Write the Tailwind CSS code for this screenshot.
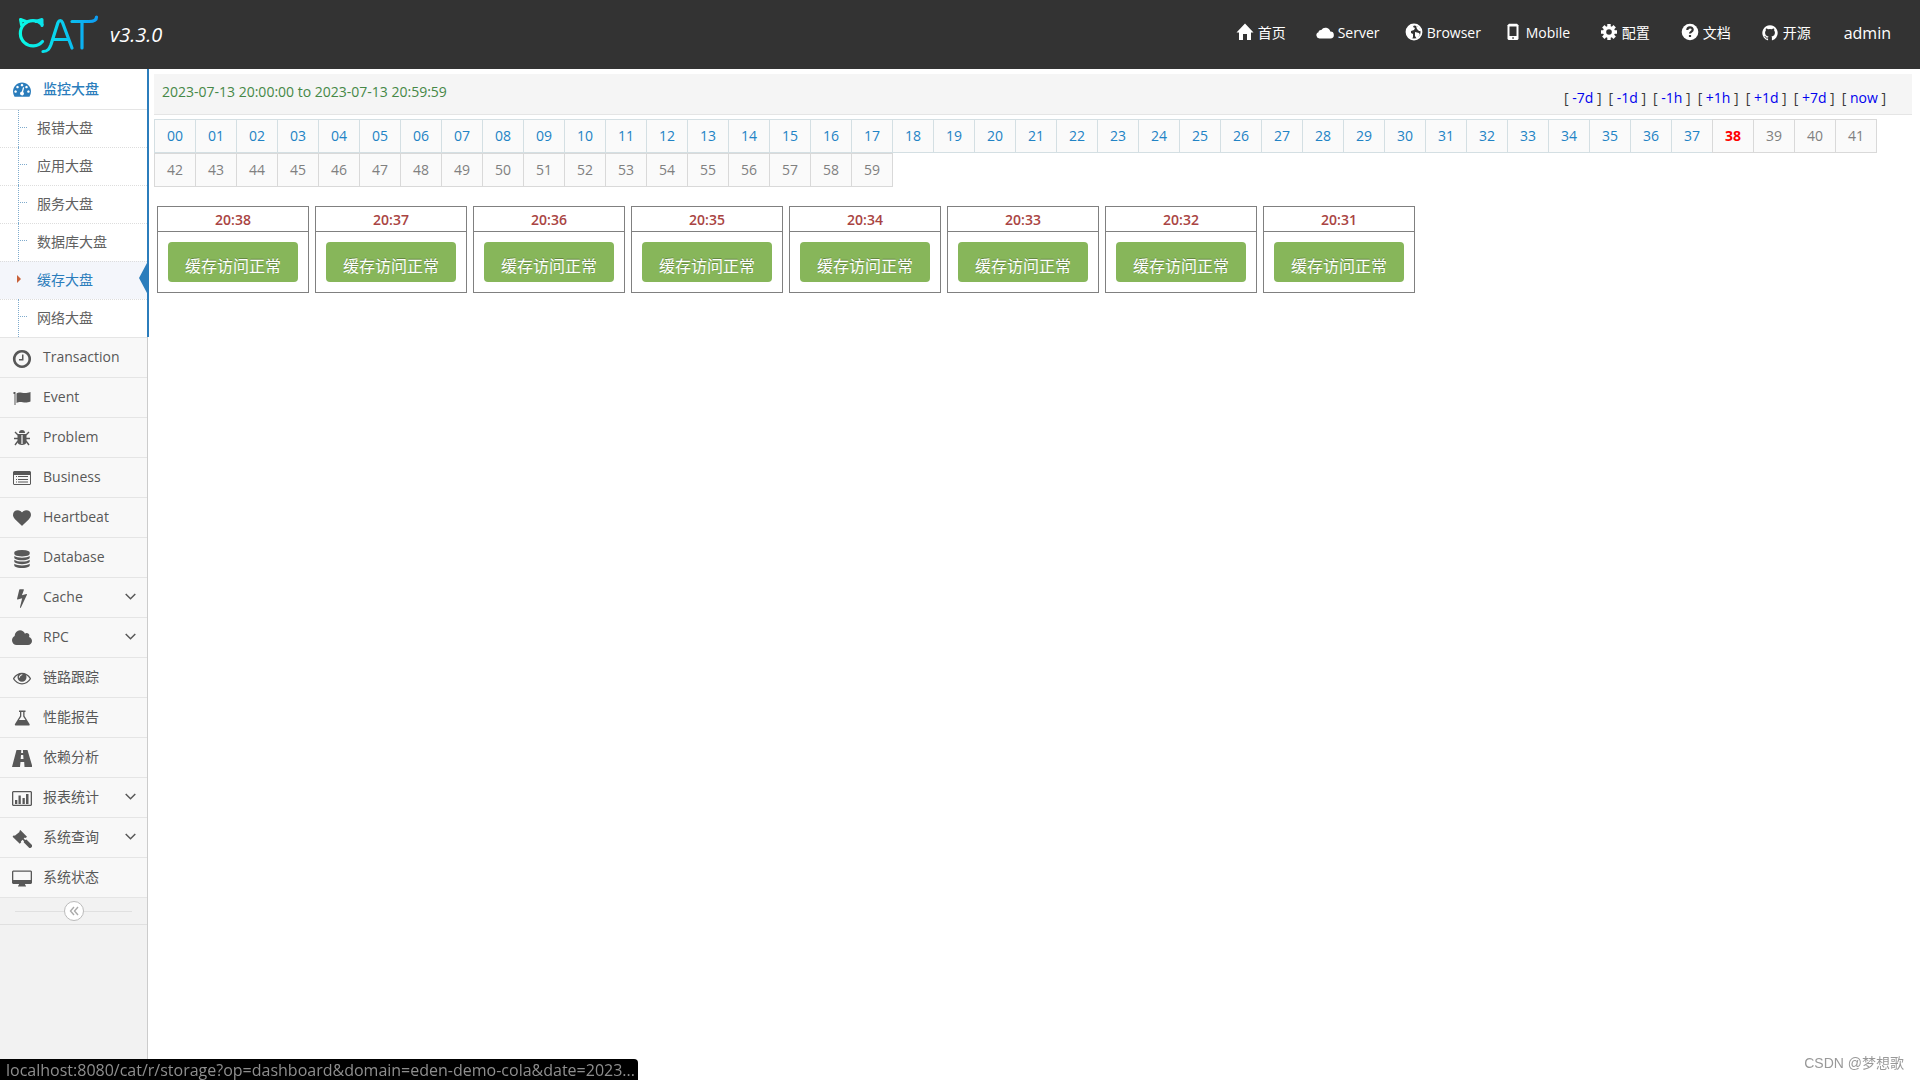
<!DOCTYPE html>
<html lang="zh-CN">
<head>
<meta charset="utf-8">
<meta name="viewport" content="width=device-width, initial-scale=1">
<title>CAT</title>
<script src="https://cdn.jsdelivr.net/npm/@tailwindcss/browser@4"></script>
</head>
<body class="flex min-h-screen flex-col bg-white font-['Open_Sans','Noto_Sans_CJK_SC',sans-serif] text-sm text-[#393939]">
<header class="flex h-[69px] shrink-0 items-center justify-between bg-[#333] text-white">
  <a href="#" class="flex items-center pb-[2px] pl-4">
    <svg class="h-12 w-[84px]" viewBox="0 0 84 48" fill="none" stroke-width="3.2" stroke-linecap="round" stroke-linejoin="round" role="img" aria-label="CAT">
      <defs><linearGradient id="g" gradientUnits="userSpaceOnUse" x1="2" y1="0" x2="82" y2="0"><stop offset="0" stop-color="#08fce4"/><stop offset=".5" stop-color="#0ad2ee"/><stop offset="1" stop-color="#0d9cf4"/></linearGradient></defs>
      <g stroke="url(#g)">
        <path d="M26.500 31.500A12.600 12.600 0 1 1 26 14.500"/>
        <path d="M5.500 15 4.500 9.500 10 11.500M26 15.500V9.500l-6 2" stroke-width="3"/>
        <path d="M27 41.500c5 0 6.500-3 8-7L42 12.500c1-2.500 3.500-2.500 4.500 0l9.500 25.500M38 29.500h14"/>
        <path d="M56 11.500h17c5 0 7.500-1 7.500-4.500M66 12v26"/>
      </g>
    </svg>
    <span class="mt-[2px] pl-[10px] text-xl italic">v3.3.0</span>
  </a>
  <nav aria-label="主导航" class="flex h-[66px] items-center pr-[29px] pb-1">
    <a href="#" class="flex w-20 items-center gap-1"><svg class="size-[18px] -translate-y-px" viewBox="0 0 18 18" fill="currentColor"><path d="M9 .5 17.500 9.500H15V17h-4v-6H7v6H3V9.500H.5Z"/></svg>首页</a>
    <a href="#" class="flex w-[89px] items-center gap-1"><svg class="size-[18px]" viewBox="0 0 18 18" fill="currentColor"><path d="M3.500 14.500a3.200 3.200 0 0 1-1-6.200 2.300 2.300 0 0 1 2.800-2.300A5 5 0 0 1 14.300 7.600 3.400 3.400 0 0 1 14.500 14.500Z"/></svg>Server</a>
    <a href="#" class="flex w-[99px] items-center gap-1"><svg class="size-[18px] -translate-y-px" viewBox="0 0 18 18"><circle cx="9" cy="9" r="7.500" fill="#333" stroke="#fff" stroke-width="1.800"/><path d="M2 6 5 2.500 9 2 8 4l2 1-1 2-3 1 0 2 2 1 0 3-1 2C3 15 1 10 2 6ZM11 3l3 1 2 4-2 0-2-2ZM10 9l4 1 1 2-3 4-2-3Z" fill="#fff"/></svg>Browser</a>
    <a href="#" class="flex w-24 items-center gap-1"><svg class="size-[18px] -translate-y-px" viewBox="0 0 18 18"><path d="M5 .8h8l1.500 1.500V16L13.500 17h-9L3.500 16V2.300Z" fill="#fff"/><path d="M5.500 3.500h7v9.500h-7ZM8.300 14.300h1.500v1.500H8.300Z" fill="#333"/></svg>Mobile</a>
    <a href="#" class="flex w-[81px] items-center gap-1"><svg class="size-[18px] -translate-y-px" viewBox="0 0 18 18"><g stroke="#fff" stroke-width="3.400"><path d="M9 1v16M1 9h16M3.300 3.300l11.400 11.400M14.700 3.300 3.300 14.700"/></g><circle cx="9" cy="9" r="6" fill="#fff"/><circle cx="9" cy="9" r="2.800" fill="#333"/></svg>配置</a>
    <a href="#" class="flex w-20 items-center gap-1"><svg class="size-[18px] -translate-y-px" viewBox="0 0 18 18"><circle cx="9" cy="9" r="8.300" fill="#fff"/><path d="M6.300 7c0-3.500 5.400-3.500 5.400-.3C11.700 8.500 9 8.600 9 10.500M9 12v2" fill="none" stroke="#333" stroke-width="2.200"/></svg>文档</a>
    <a href="#" class="flex w-[83px] items-center gap-1"><svg class="size-[18px]" viewBox="0 0 1792 1792" fill="currentColor"><path d="M896 128q209 0 385.500 103t279.500 279.500 103 385.500q0 251-146.500 451.500t-378.500 277.500q-27 5-40-7t-13-30q0-3 .5-76.500t.5-134.500q0-97-52-142 57-6 102.500-18t94-39 81-66.500 53-105 20.500-150.500q0-119-79-206 37-91-8-204-28-9-81 11t-92 44l-38 24q-93-26-192-26t-192 26q-16-11-42.500-27t-83.500-38.500-85-13.500q-45 113-8 204-79 87-79 206 0 85 20.500 150t52.500 105 80.500 67 94 39 102.500 18q-39 36-49 103-21 10-45 15t-57 5-65.500-21.500-55.500-62.500q-19-32-48.500-52t-49.500-24l-20-3q-21 0-29 4.500t-5 11.500 9 14 13 12l7 5q22 10 43.500 38t31.500 51l10 23q13 38 44 61.500t67 30 69.500 7 55.500-3.500l23-4q0 38 .5 88.500t.5 54.500q0 18-13 30t-40 7q-232-77-378.500-277.500t-146.500-451.500q0-209 103-385.500t279.500-279.500 385.500-103z"/></svg>开源</a>
    <a href="#" class="text-base">admin</a>
  </nav>
</header>
<div class="flex grow">
  <aside class="flex w-[148px] shrink-0 flex-col border-r border-[#ccc] bg-[#f2f2f2] text-[#585858]">
    <div class="relative z-10 -mr-[2px] border-r-2 border-[#2b7dbc] bg-white">
      <a href="#" class="flex h-[41px] items-center border-b border-[#e5e5e5] pl-3 font-medium text-[#2b7dbc]">
        <svg class="mr-[11px] size-5" viewBox="-100 0 1992 1792" fill="currentColor"><path fill-rule="evenodd" d="M384 1152q0-53-37.500-90.500t-90.500-37.500-90.500 37.500-37.500 90.500 37.500 90.500 90.500 37.500 90.500-37.500 37.500-90.500zm192-448q0-53-37.500-90.500t-90.500-37.500-90.500 37.500-37.500 90.500 37.500 90.500 90.500 37.500 90.500-37.500 37.500-90.500zm428 481l101-382q6-26-7.500-48.500t-38.500-29.500-48 6.500-30 39.500l-101 382q-60 5-107 43.500t-63 98.500q-20 77 20 146t117 89 146-20 89-117q16-60-6-117t-72-91zm660-33q0-53-37.500-90.500t-90.500-37.500-90.500 37.500-37.500 90.500 37.500 90.500 90.500 37.500 90.500-37.500 37.500-90.500zm-640-640q0-53-37.500-90.500t-90.500-37.500-90.500 37.500-37.500 90.500 37.500 90.500 90.500 37.500 90.500-37.500 37.500-90.500zm448 192q0-53-37.500-90.500t-90.500-37.500-90.500 37.500-37.500 90.500 37.500 90.500 90.500 37.500 90.500-37.500 37.500-90.500zm320 448q0 261-141 483-19 29-54 29h-1402q-35 0-54-29-141-221-141-483 0-182 71-348t191-286 286-191 348-71 348 71 286 191 191 286 71 348z"/></svg>监控大盘
      </a>
      <ul id="sub"></ul>
    </div>
    <ul id="menu" class="border-t border-[#e5e5e5]"></ul>
    <div class="relative flex h-[27px] items-center justify-center border-b border-[#e0e0e0] before:absolute before:inset-x-[15px] before:top-[13px] before:border-t before:border-[#e0e0e0]">
      <button aria-label="收起菜单" class="relative flex size-5 items-center justify-center rounded-full border border-[#bbb] bg-white text-[#aaa]"><svg class="size-3" viewBox="0 0 12 12" fill="none" stroke="currentColor" stroke-width="1.400"><path d="M6 2 2.500 6 6 10M10 2 6.500 6 10 10"/></svg></button>
    </div>
  </aside>
  <main class="min-w-0 grow pt-[5px] pr-2 pl-[6px]">
    <div class="flex h-[41px] justify-between border-b border-[#e5e5e5] bg-[#f5f5f5] pr-[26px] pl-2">
      <span class="pt-2 text-[#468847]">2023-07-13 20:00:00 to 2023-07-13 20:59:59</span>
      <div id="range" class="flex gap-[7px] pt-[14px]"></div>
    </div>
    <div id="minutes" class="mt-1 flex flex-wrap pr-[30px]"></div>
    <div id="cards" class="mt-[19px] flex flex-wrap gap-[6px] pl-[3px]"></div>
  </main>
</div>
<div class="fixed bottom-0 left-0 z-20 h-[21px] w-[638px] overflow-hidden rounded-tr bg-black pl-[6px] text-base leading-[22px] whitespace-nowrap text-[#8e8e8e]">localhost:8080/cat/r/storage?op=dashboard&amp;domain=eden-demo-cola&amp;date=2023...</div>
<div class="fixed right-4 bottom-[7px] font-['Liberation_Sans','Noto_Sans_CJK_SC',sans-serif] text-sm text-[#999]">CSDN @梦想歌</div>
<script>
const svg = (box, body) => `<svg class="mt-1 mr-[11px] size-5" viewBox="${box}" fill="currentColor">${body}</svg>`;
const icons = {
  clock: svg('-50 -50 1892 1892', '<path fill-rule="evenodd" d="M1024 544v448q0 14-9 23t-23 9h-320q-14 0-23-9t-9-23v-64q0-14 9-23t23-9h224v-352q0-14 9-23t23-9h64q14 0 23 9t9 23zm416 352q0-148-73-273t-198-198-273-73-273 73-198 198-73 273 73 273 198 198 273 73 273-73 198-198 73-273zm224 0q0 209-103 385.500t-279.500 279.500-385.500 103-385.500-103-279.500-279.500-103-385.500 103-385.500 279.500-279.500 385.500-103 385.500 103 279.500 279.500 103 385.500z" transform="translate(-110 -110) scale(1.120)"/>'),
  flag: svg('0 0 20 20', '<path d="M1.500 3h2v13h-1V5h-1ZM4.500 4.500c4-3 6 1.500 14-1.500v9.500c-7 3-9-1.500-14 1.500Z"/>'),
  bug: svg('0 0 20 20', '<path d="M7 4a3 3 0 0 1 6 0ZM5.500 5h9v8c0 4-9 4-9 0Z"/><path d="M6 6 3 3M14 6l3-3M6 9.500H2M14 9.500h4M6 12l-3 4M14 12l3 4" stroke="currentColor" stroke-width="1.400"/><path d="M9.400 6h1.200v9H9.400Z" fill="#f8f8f8"/>'),
  list: svg('0 1 20 20', '<path fill-rule="evenodd" d="M2 3h16l1 1v12l-1 1H2l-1-1V4Zm0 4v9h16V7ZM4 8h1v1H4ZM6 8h10v1H6ZM4 11h1v1H4ZM6 11h10v1H6ZM4 13.500h1v1H4ZM6 13.500h10v1H6Z"/>'),
  heart: svg('-100 0 1992 1992', '<path d="M896 1664q-26 0-44-18l-624-602q-10-8-27.500-26t-55.500-65.500-68-97.500-53.500-121-23.500-138q0-220 127-344t351-124q62 0 126.500 21.500t120 58 95.500 68.500 76 68q36-36 76-68t95.500-68.500 120-58 126.500-21.500q224 0 351 124t127 344q0 221-229 450l-623 600q-18 18-44 18z"/>'),
  database: svg('-100 -100 1992 1992', '<path d="M896 768q237 0 443-43t325-127v170q0 69-103 128t-280 93.500-385 34.500-385-34.500-280-93.500-103-128v-170q119 84 325 127t443 43zm0 768q237 0 443-43t325-127v170q0 69-103 128t-280 93.500-385 34.500-385-34.500-280-93.500-103-128v-170q119 84 325 127t443 43zm0-384q237 0 443-43t325-127v170q0 69-103 128t-280 93.500-385 34.500-385-34.500-280-93.500-103-128v-170q119 84 325 127t443 43zm0-1152q208 0 385 34.500t280 93.500 103 128v128q0 69-103 128t-280 93.500-385 34.500-385-34.500-280-93.500-103-128v-128q0-69 103-128t280-93.500 385-34.500z"/>'),
  bolt: svg('0 100 1792 1792', '<path d="M1333 566q18 20 7 44l-540 1157q-13 25-42 25-4 0-14-2-17-5-25.500-19t-4.500-30l197-808-406 101q-4 1-12 1-18 0-31-11-18-15-13-39l201-825q4-14 16-23t28-9h328q19 0 32 12.500t13 29.500q0 8-5 18l-171 463 396-98q8-2 12-2 19 0 34 15z"/>'),
  cloud: svg('64 0 1920 1920', '<path d="M1984 1152q0 159-112.500 271.500t-271.500 112.500h-1088q-185 0-316.500-131.500t-131.500-316.500q0-132 71-241.500t187-163.500q-2-28-2-43 0-212 150-362t362-150q158 0 286.500 88t187.500 230q70-62 166-62 106 0 181 75t75 181q0 75-41 138 129 30 213 134.500t84 239.500z"/>'),
  eye: svg('-100 0 1992 1992', '<path fill-rule="evenodd" d="M1664 960q-152-236-381-353 61 104 61 225 0 185-131.500 316.500t-316.500 131.500-316.500-131.500-131.500-316.500q0-121 61-225-229 117-381 353 133 205 333.500 326.500t434.500 121.500 434.500-121.500 333.500-326.500zm-720-384q0-20-14-34t-34-14q-125 0-214.500 89.500t-89.500 214.500q0 20 14 34t34 14 34-14 14-34q0-86 61-147t147-61q20 0 34-14t14-34zm848 384q0 34-20 69-140 230-376.500 368.500t-499.500 138.500-499.500-139-376.500-368q-20-35-20-69t20-69q140-229 376.500-368t499.500-139 499.500 139 376.500 368q20 35 20 69z"/>'),
  flask: svg('0 1 20 20', '<path fill-rule="evenodd" d="M7 2.500h6.500V4h-1v4l5 8c.6 1-.1 1.500-1 1.500H4c-1 0-1.500-.6-1-1.500l5-8V4H7ZM9.300 4v4.500L7 12h6.500l-2.300-3.500V4Z"/>'),
  road: svg('0 0 20 20', '<path fill-rule="evenodd" d="M4.500 1h4.800l-.2 3h2l-.2-3h4.600l5 17h-8l-.3-5H8.500L8 18H0ZM9 6l-.3 4h2.800L11.200 6Z"/>'),
  chart: svg('0 1 20 20', '<path fill-rule="evenodd" d="M1 3h18l1 1v13l-1 1H1l-1-1V4Zm.3 1.300v12.400h17.400V4.300ZM3 12h2.300v4H3ZM6.500 7.500h2.300V16H6.500ZM10.500 10h2.300v6h-2.300ZM14 6h2.500v10H14Z"/>'),
  gavel: svg('1 1 18 18', '<path d="m8.500 2 6 6-1.200 1-.8-.3-1 1L13 11l1-.5 5.200 5c.8 1-1.700 3.300-2.600 2.500L11.500 13l.3-1-1.300-1.300-1.500 1.500.3.8L8 14.300 1.500 8l1.200-1.300.8.3L8 3.500 7.500 3Z"/>'),
  desktop: svg('0 1 20 20', '<path fill-rule="evenodd" d="M1 2.500h18l1 1V15l-1 1h-6l.3 1.500h.7V18.500H6v-1h.7L7 16H1l-1-1V3.500ZM1.300 3.800V12h17.400V3.800Z"/>')
};
document.getElementById('sub').innerHTML = ['报错大盘','应用大盘','服务大盘','数据库大盘','缓存大盘','网络大盘'].map((t, i) => {
  const on = i === 4;
  const mark = on
    ? '<svg class="absolute top-[14px] left-[17px] h-2 w-1" viewBox="0 0 4 8"><path d="M0 0 4 4 0 8Z" fill="#c86139"/></svg><svg class="absolute top-[2px] right-0 h-[30px] w-2" viewBox="0 0 8 30"><path d="M8 0 0 15 8 30Z" fill="#2b7dbc"/></svg>'
    : '<span class="absolute inset-y-0 left-[18px] border-l border-dotted border-[#7fabcd]"></span><span class="absolute top-[17px] left-5 w-[7px] border-t border-dotted border-[#7fabcd]"></span>';
  return `<li class="relative"><a href="#" class="flex items-center pb-px pl-[37px] ${i ? 'h-[38px] border-t border-dotted border-[#ddd]' : 'h-[37px]'} ${on ? 'bg-[#f4f6fb] text-[#2b7dbc]' : 'text-[#616161]'}">${t}</a>${mark}</li>`;
}).join('');
document.getElementById('menu').innerHTML = [['clock','Transaction'],['flag','Event'],['bug','Problem'],['list','Business'],['heart','Heartbeat'],['database','Database'],['bolt','Cache',1],['cloud','RPC',1],['eye','链路跟踪'],['flask','性能报告'],['road','依赖分析'],['chart','报表统计',1],['gavel','系统查询',1],['desktop','系统状态']].map(([k, t, more]) =>
  `<li><a href="#" class="flex h-10 items-center border-b border-[#e5e5e5] bg-[#f8f8f8] pr-[11px] pb-[2px] pl-3">${icons[k]}<span class="grow">${t}</span>${more ? '<svg class="h-[7px] w-[11px]" viewBox="0 0 11 7" fill="none" stroke="currentColor" stroke-width="1.500"><path d="m.7 1 4.800 4.800L10.300 1"/></svg>' : ''}</a></li>`).join('');
document.getElementById('range').innerHTML = ['-7d','-1d','-1h','+1h','+1d','+7d','now'].map(t => `<span>[ <a href="#" class="text-[#0000ee]">${t}</a> ]</span>`).join('');
document.getElementById('minutes').innerHTML = Array.from({length: 60}, (_, i) => {
  const tone = i < 38 ? 'border-[#d4dfe3] text-[#2283c5]' : i === 38 ? 'border-[#d9d9d9] font-bold text-[#ff0000]' : 'border-[#d9d9d9] text-[#808080]';
  return `<a href="#" class="-mr-px flex h-[34px] w-[42px] items-center justify-center border bg-[#fafafa] ${tone}">${String(i).padStart(2, '0')}</a>`;
}).join('');
document.getElementById('cards').innerHTML = [38,37,36,35,34,33,32,31].map(m =>
  `<section class="w-[152px] border border-[#808080]"><h2 class="h-[25px] border-b border-[#808080] pt-px text-center leading-6 font-semibold text-[#a94442]">20:${m}</h2><div class="p-[10px]"><button class="flex h-10 w-full items-center justify-center rounded bg-[#87b65a] pt-2 text-base text-white [text-shadow:0_-1px_0_rgba(0,0,0,0.25)]">缓存访问正常</button></div></section>`).join('');
</script>
</body>
</html>
